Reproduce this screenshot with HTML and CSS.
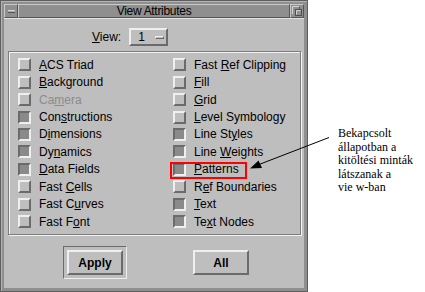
FILE: index.html
```html
<!DOCTYPE html>
<html lang="hu">
<head>
    <meta charset="UTF-8">
    <title>View Attributes</title>
    <link rel="stylesheet" href="styles.css">
</head>
<body>
<div class="page">
    <div class="window">
        <div class="titlebar">
            <span class="tbtn"><span class="menu-bar"></span></span>
            <span class="title">View Attributes</span>
            <span class="tbtn">
                <svg width="12" height="12" viewBox="0 0 12 12">
                    <path d="M1.5 9V1.5H8.5" stroke="#d4d4d4" fill="none"/>
                    <path d="M8.5 1.5V4" stroke="#555" fill="none"/>
                    <rect x="4.5" y="4.5" width="6" height="6" fill="#8f8f8f" stroke="#4e4e4e"/>
                    <path d="M5.5 9.5V5.5H9.5" stroke="#d4d4d4" fill="none"/>
                </svg>
            </span>
        </div>
        <div class="client">
            <div class="view-row">
                <span class="label"><u>V</u>iew:</span>
                <span class="option">1<span class="indicator"></span></span>
            </div>
            <div class="group">
                <div class="col">
                    <div class="item"><span class="box"></span><span><u>A</u>CS Triad</span></div>
                    <div class="item"><span class="box"></span><span><u>B</u>ackground</span></div>
                    <div class="item disabled"><span class="box"></span><span>Ca<u>m</u>era</span></div>
                    <div class="item"><span class="box on"></span><span>Con<u>s</u>tructions</span></div>
                    <div class="item"><span class="box on"></span><span>D<u>i</u>mensions</span></div>
                    <div class="item"><span class="box on"></span><span>Dy<u>n</u>amics</span></div>
                    <div class="item"><span class="box on"></span><span><u>D</u>ata Fields</span></div>
                    <div class="item"><span class="box"></span><span>Fast <u>C</u>ells</span></div>
                    <div class="item"><span class="box"></span><span>Fast C<u>u</u>rves</span></div>
                    <div class="item"><span class="box"></span><span>Fast F<u>o</u>nt</span></div>
                </div>
                <div class="col">
                    <div class="item"><span class="box"></span><span>Fast <u>R</u>ef Clipping</span></div>
                    <div class="item"><span class="box"></span><span><u>F</u>ill</span></div>
                    <div class="item"><span class="box"></span><span><u>G</u>rid</span></div>
                    <div class="item"><span class="box"></span><span><u>L</u>evel Symbology</span></div>
                    <div class="item"><span class="box on"></span><span>Line St<u>y</u>les</span></div>
                    <div class="item"><span class="box on"></span><span>Line <u>W</u>eights</span></div>
                    <div class="item marked"><span class="box on"></span><span><u>P</u>atterns</span></div>
                    <div class="item"><span class="box"></span><span>R<u>e</u>f Boundaries</span></div>
                    <div class="item"><span class="box on"></span><span><u>T</u>ext</span></div>
                    <div class="item"><span class="box on"></span><span>Te<u>x</u>t Nodes</span></div>
                </div>
            </div>
            <div class="actions">
                <span class="ring"><button class="btn">Apply</button></span>
                <button class="btn">All</button>
            </div>
        </div>
    </div>
    <p class="note">Bekapcsolt<br>állapotban a<br>kitöltési minták<br>látszanak a<br>vie w-ban</p>
    <svg class="arrow" width="425" height="292" viewBox="0 0 425 292">
        <line x1="259" y1="164.5" x2="329" y2="137.5" stroke="#000" stroke-width="1"/>
        <polygon points="250,168.5 258.5,160.5 262,168" fill="#000"/>
    </svg>
</div>
</body>
</html>
```

FILE: styles.css
```css
html, body{
    margin: 0;
    padding: 0;
    background: #fff;
}

body{
    font-family: "Liberation Sans", Arial, sans-serif;
    font-size: 12px;
    color: #000;
}

.page{
    position: relative;
    display: flex;
    width: 425px;
    height: 292px;
}

/* window frame */
.window{
    box-sizing: border-box;
    width: 308px;
    height: 292px;
    border: 1px solid #5e5e5e;
    padding: 3px;
    background: #8f8f8f;
    box-shadow: inset 1px 1px 0 #b4b4b4;
    display: flex;
    flex-direction: column;
}

.titlebar{
    display: flex;
    height: 14px;
}

.tbtn,
.title{
    box-sizing: border-box;
    height: 14px;
    border: 1px solid;
    border-color: #c9c9c9 #555 #555 #c9c9c9;
    background: #8f8f8f;
}

.tbtn{
    width: 14px;
    display: flex;
    align-items: center;
    justify-content: center;
}

.menu-bar{
    box-sizing: border-box;
    width: 7px;
    height: 3px;
    border-top: 1px solid #d4d4d4;
    border-bottom: 1px solid #555;
    background: #a8a8a8;
}

.title{
    flex: 1;
    text-align: center;
    line-height: 12px;
    letter-spacing: -0.3px;
}

.client{
    flex: 1;
    background: #bebebe;
    border-top: 1px solid #e4e4e4;
    padding-top: 9px;
}

/* view selector */
.view-row{
    display: flex;
    align-items: center;
    gap: 8px;
    height: 18px;
    margin-left: 88px;
}

.option{
    box-sizing: border-box;
    width: 39px;
    height: 18px;
    border: 2px solid;
    border-color: #efefef #6b6b6b #6b6b6b #efefef;
    padding: 0 2px 0 7px;
    display: flex;
    align-items: center;
    justify-content: space-between;
}

.indicator{
    box-sizing: border-box;
    width: 9px;
    height: 3px;
    border: 1px solid;
    border-color: #efefef #6b6b6b #6b6b6b #efefef;
}

/* checkbox group */
.group{
    box-sizing: border-box;
    width: 293px;
    margin: 5px 0 0 4px;
    border: 1px solid #7d7d7d;
    box-shadow: 1px 1px 0 #f2f2f2, inset 1px 1px 0 #f2f2f2;
    padding: 4px 0 4px 9px;
    display: flex;
}

.col{
    display: flex;
    flex-direction: column;
}

.col:first-child{
    width: 155px;
}

.item{
    position: relative;
    display: flex;
    align-items: center;
    height: 17.44px;
    white-space: nowrap;
}

.box{
    box-sizing: border-box;
    width: 13px;
    height: 13px;
    margin-right: 8px;
    border: 2px solid;
    border-color: #efefef #6b6b6b #6b6b6b #efefef;
    background: #bebebe;
}

.box.on{
    border-color: #6b6b6b #efefef #efefef #6b6b6b;
    background: #8a8a8a;
}

.item.disabled{
    color: #8c8c8c;
}

.item.marked::after{
    content: "";
    position: absolute;
    left: -3px;
    top: 1px;
    width: 77px;
    height: 17px;
    box-sizing: border-box;
    border: 2px solid #f00;
}

/* buttons */
.actions{
    display: flex;
    align-items: center;
    gap: 66px;
    margin: 11px 0 0 59px;
}

.ring{
    box-sizing: border-box;
    width: 64px;
    height: 33px;
    border: 1px solid;
    border-color: #6b6b6b #efefef #efefef #6b6b6b;
    padding: 3px;
    display: flex;
}

.btn{
    box-sizing: border-box;
    width: 56px;
    height: 25px;
    margin: 0;
    padding: 0;
    border: 2px solid;
    border-color: #efefef #6b6b6b #6b6b6b #efefef;
    background: #bebebe;
    color: #000;
    font-family: "Liberation Sans", Arial, sans-serif;
    font-size: 12px;
    font-weight: bold;
}

/* annotation */
.note{
    margin: 127px 0 0 30px;
    font-family: "Liberation Serif", "Times New Roman", serif;
    font-size: 12px;
    line-height: 13.5px;
}

.arrow{
    position: absolute;
    left: 0;
    top: 0;
    pointer-events: none;
}
```
